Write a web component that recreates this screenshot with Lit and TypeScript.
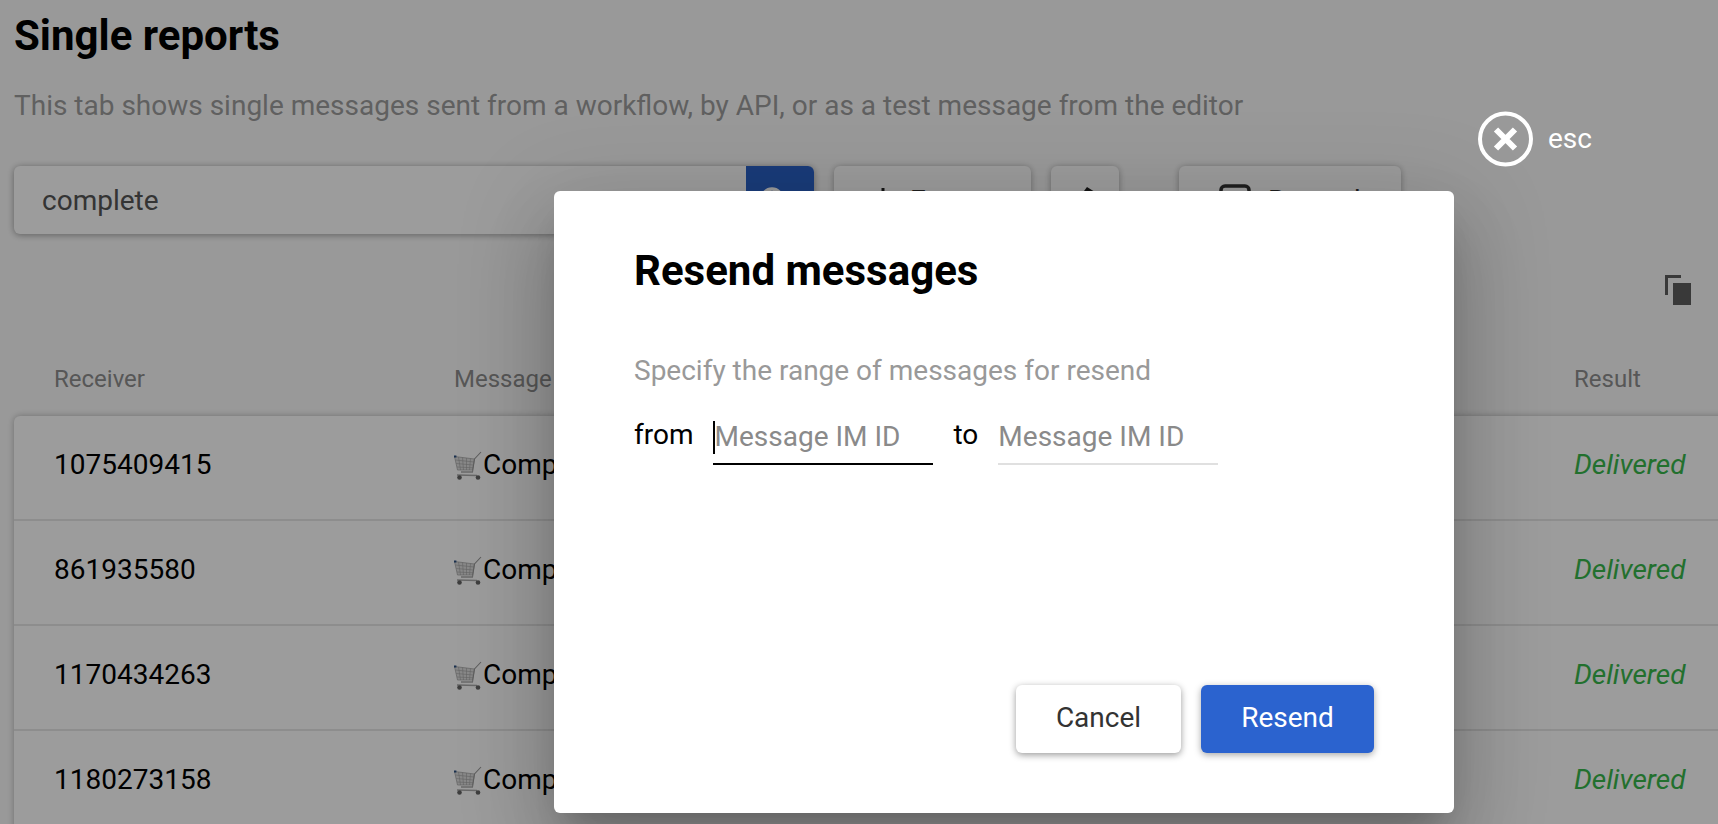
import { LitElement, html, css, svg } from "lit";
import { customElement } from "lit/decorators.js";

const rows = ["1075409415", "861935580", "1170434263", "1180273158"];

const cart = svg`<svg class="cart" viewBox="0 0 30 30" width="30" height="30" aria-hidden="true">
  <path d="M1.5 5.5 L21.5 8 L19.5 19 L4.5 19 Z" fill="#dedede" stroke="#aaa" stroke-width=".8"/>
  <path d="M5.5 6 L7.5 19 M9.5 6.5 L10.5 19 M13.5 7 L13.5 19 M17.5 7.5 L16.5 19 M2.5 9 L21 11 M3.2 12.5 L20.4 14 M4 16 L19.9 16.8" stroke="#a2a2a2" stroke-width=".6" fill="none"/>
  <path d="M19.5 21 L21.5 8 L28 1" stroke="#999" stroke-width="1.1" fill="none"/>
  <path d="M4 24 L24 24.5 M8 21 L20 21" stroke="#aaa" stroke-width="1.3" fill="none"/>
  <rect x="1" y="4.5" width="2.4" height="2" fill="#2a4f80"/>
  <circle cx="6.5" cy="26.5" r="2.3" fill="#666"/><circle cx="25" cy="26.5" r="2.3" fill="#666"/>
</svg>`;

@customElement("app-root")
export class AppRoot extends LitElement {
  static styles = css`
    :host { display: block; height: 824px; overflow: hidden; position: relative; font-family: Roboto, "Liberation Sans", sans-serif; background: #fbfbfb; }
    .page { padding: 0 0 0 14px; width: 1800px; box-sizing: border-box; }
    h1 { margin: 0 0 14px; font-size: 42px; line-height: 72px; font-weight: 700; color: #000; }
    .sub { margin: 0 0 40px; font-size: 28px; line-height: 40px; color: #9e9e9e; }
    .toolbar { display: flex; height: 68px; }
    .search { width: 800px; display: flex; background: #fff; border-radius: 6px; box-shadow: 0 1px 7px rgba(0,0,0,.38); overflow: hidden; }
    .search span { flex: 1; padding-left: 28px; font-size: 28px; line-height: 70px; color: #555; }
    .search .go { width: 68px; background: #2b62c8; display: flex; justify-content: center; padding: 20px 12px 0 0; box-sizing: border-box; flex: none; }
    .btn { background: #fff; border-radius: 6px; box-shadow: 0 1px 7px rgba(0,0,0,.32); display: flex; align-items: center; font-size: 28px; color: #333; box-sizing: border-box; }
    .export { width: 197px; margin-left: 20px; padding-left: 37px; gap: 15px; }
    .swap { width: 68px; margin-left: 20px; justify-content: center; }
    .report { width: 222px; margin-left: 60px; padding-left: 40px; gap: 17px; }
    .copy-row { height: 125px; display: flex; justify-content: flex-end; padding-top: 41px; box-sizing: border-box; width: 1677px; }
    .grid { display: grid; grid-template-columns: 400px 1120px 200px; padding-left: 40px; }
    .head { height: 57px; font-size: 24px; line-height: 40px; color: #8e8e8e; box-sizing: border-box; }
    .cards { background: #fff; border-radius: 6px; box-shadow: 0 0 7px rgba(0,0,0,.28); }
    .row { height: 105px; padding-top: 29px; box-sizing: border-box; border-bottom: 2px solid #e6e6e6; font-size: 28px; line-height: 40px; color: #000; }
    .msg { display: flex; align-items: center; height: 40px; margin-left: -1px; }
    .cart { flex: none; margin-top: 1px; }
    .ok { font-style: italic; color: #38b84c; }
    .overlay { position: absolute; inset: 0; background: rgba(0,0,0,.39); padding: 191px 0 0 554px; box-sizing: border-box; }
    .close { position: absolute; left: 1478px; top: 111px; display: flex; align-items: center; gap: 15px; color: #fff; font-size: 28px; line-height: 56px; }
    .modal { width: 900px; height: 622px; background: #fff; border-radius: 6px; padding: 48px 80px 60px; box-sizing: border-box; display: flex; flex-direction: column;
      box-shadow: 0 22px 30px -14px rgba(0,0,0,.2), 0 48px 76px 6px rgba(0,0,0,.14), 0 18px 92px 16px rgba(0,0,0,.12); }
    h2 { margin: 0 0 48px; font-size: 42px; line-height: 64px; font-weight: 700; color: #000; }
    .hint { margin: 0; font-size: 28px; line-height: 40px; color: #999; }
    .range { display: flex; align-items: flex-start; margin-top: 23px; font-size: 28px; color: #000; }
    .range > span { line-height: 40px; padding-top: 1px; }
    .field { position: relative; height: 49px; width: 220px; border-bottom: 2px solid #e0e0e0; margin-left: 20px; }
    .field input { display: block; width: 100%; height: 45px; border: 0; outline: 0; padding: 0; margin: 0; background: none; font: 28px Roboto, sans-serif; color: #000; box-sizing: border-box; }
    .field input::placeholder { color: #8a8a8a; opacity: 1; }
    .field.active { border-bottom-color: #000; margin-right: 20px; }
    .field.active input { padding-left: 1px; }
    .caret { position: absolute; left: 0; top: 7px; width: 2px; height: 33px; background: #000; }
    .actions { margin-top: auto; display: flex; justify-content: flex-end; gap: 20px; }
    .actions button { height: 68px; border: 0; border-radius: 6px; font: 28px Roboto, sans-serif; padding: 0 0 4px; }
    .cancel { width: 165px; background: #fff; color: #333; box-shadow: 0 2px 7px rgba(0,0,0,.4); }
    .resend { width: 173px; background: #2b63cf; color: #fff; box-shadow: 0 2px 7px rgba(0,0,0,.35); }
  `;

  render() {
    return html`
      <div class="page">
        <h1>Single reports</h1>
        <p class="sub">This tab shows single messages sent from a workflow, by API, or as a test message from the editor</p>
        <div class="toolbar">
          <div class="search"><span>complete</span><div class="go">
            <svg width="30" height="30" viewBox="0 0 30 30"><circle cx="13" cy="13" r="10" fill="none" stroke="#fff" stroke-width="3.5"/><path d="M20 20 L28 28" stroke="#fff" stroke-width="3.5"/></svg>
          </div></div>
          <div class="btn export">
            <svg width="24" height="30" viewBox="0 0 24 30"><path d="M12 3 V20 M4 13 L12 21 L20 13 M2 27 H22" fill="none" stroke="#222" stroke-width="3"/></svg>
            <span>Export</span>
          </div>
          <div class="btn swap">
            <svg width="30" height="30" viewBox="0 0 30 30"><path d="M17 2 L25 7 L17 12 V9 H6 V6 H14 Z M13 18 L5 23 L13 28 V25 H24 V21 H13 Z" fill="#222"/></svg>
          </div>
          <div class="btn report">
            <svg width="32" height="32" viewBox="0 0 32 32"><rect x="2" y="2" width="28" height="28" rx="4" fill="none" stroke="#333" stroke-width="3.5"/></svg>
            <span>Resend</span>
          </div>
        </div>
        <div class="copy-row">
          <svg width="26" height="30" viewBox="0 0 26 30"><path d="M0 20 V0 H16 V3 H3 V20 Z M8 8 H26 V30 H8 Z" fill="#5e5e5e"/></svg>
        </div>
        <div class="grid head"><span>Receiver</span><span>Message</span><span>Result</span></div>
        <div class="cards">
          ${rows.map((r) => html`<div class="grid row"><span>${r}</span><span class="msg">${cart}Complete</span><span class="ok">Delivered</span></div>`)}
        </div>
      </div>
      <div class="overlay">
        <div class="close">
          <svg width="55" height="56" viewBox="0 0 55 56"><circle cx="27.5" cy="28" r="25.5" fill="none" stroke="#fff" stroke-width="4"/><path d="M18 18.5 L37 37.5 M37 18.5 L18 37.5" fill="none" stroke="#fff" stroke-width="6"/></svg>
          <span>esc</span>
        </div>
        <div class="modal">
          <h2>Resend messages</h2>
          <p class="hint">Specify the range of messages for resend</p>
          <div class="range">
            <span>from</span>
            <div class="field active"><input placeholder="Message IM ID" /><i class="caret"></i></div>
            <span>to</span>
            <div class="field"><input placeholder="Message IM ID" /></div>
          </div>
          <div class="actions">
            <button class="cancel">Cancel</button>
            <button class="resend">Resend</button>
          </div>
        </div>
      </div>
    `;
  }
}
